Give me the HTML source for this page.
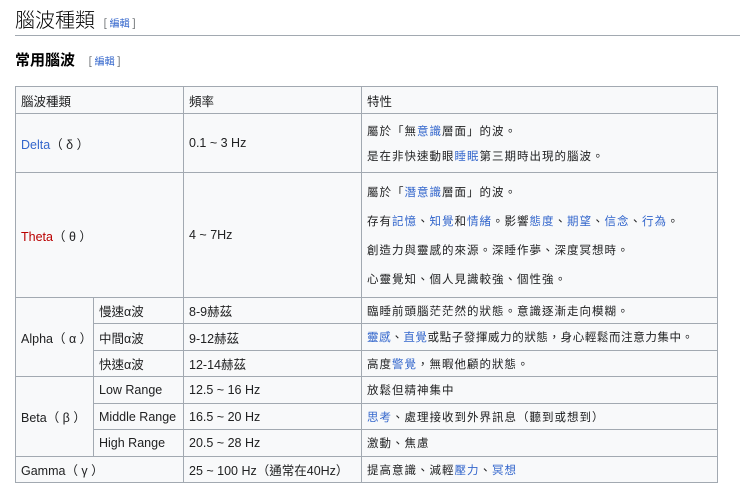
<!DOCTYPE html>
<html lang="zh-Hant"><head><meta charset="utf-8"><style>
body{margin:0;width:740px;height:494px;background:#fff;position:relative;overflow:hidden;font-family:"Liberation Sans","Noto Sans CJK TC",sans-serif;color:#202122}
.a{position:absolute}
.c{position:absolute;background:#f8f9fa;border:1px solid #a2a9b1;box-sizing:border-box;font-size:12.5px;display:flex;flex-direction:column;justify-content:center;padding-left:5px;white-space:nowrap}
.l{color:#3366cc}
.e{font-size:11px;color:#54595d;font-weight:normal}
.e b{font-weight:normal;color:#3366cc;font-size:10px}
.c p{margin:0}
.s{font-size:11.5px;letter-spacing:1px}
</style></head><body>
<div class="a" style="left:15px;top:4px;font-size:20px;font-weight:300;color:#000;font-family:'Noto Sans CJK TC',sans-serif;line-height:30px">腦波種類 <span class="e" style="margin-left:4px">[ <b>編輯</b> ]</span></div>
<div class="a" style="left:15px;top:35px;width:725px;height:1px;background:#a2a9b1"></div>
<div class="a" style="left:15px;top:49px;font-size:15px;font-weight:bold;color:#000;font-family:'Noto Sans CJK TC',sans-serif;line-height:22px">常用腦波 <span class="e" style="margin-left:10px">[ <b>編輯</b> ]</span></div>

<div class="c" style="left:15px;top:86px;width:169px;height:28px">腦波種類</div>
<div class="c" style="left:183px;top:86px;width:179px;height:28px">頻率</div>
<div class="c" style="left:361px;top:86px;width:357px;height:28px">特性</div>

<div class="c" style="left:15px;top:113px;width:169px;height:60px"><p><span class="l">Delta</span>（ δ ）</p></div>
<div class="c" style="left:183px;top:113px;width:179px;height:60px">0.1 ~ 3 Hz</div>
<div class="c s" style="left:361px;top:113px;width:357px;height:60px;justify-content:space-around;padding:4px 5px"><p>屬於「無<span class="l">意識</span>層面」的波。</p><p>是在非快速動眼<span class="l">睡眠</span>第三期時出現的腦波。</p></div>

<div class="c" style="left:15px;top:172px;width:169px;height:126px"><p><span style="color:#ba0000">Theta</span>（ θ ）</p></div>
<div class="c" style="left:183px;top:172px;width:179px;height:126px">4 ~ 7Hz</div>
<div class="c s" style="left:361px;top:172px;width:357px;height:126px;justify-content:space-around;padding:4px 5px"><p>屬於「<span class="l">潛意識</span>層面」的波。</p><p>存有<span class="l">記憶</span>、<span class="l">知覺</span>和<span class="l">情緒</span>。影響<span class="l">態度</span>、<span class="l">期望</span>、<span class="l">信念</span>、<span class="l">行為</span>。</p><p>創造力與靈感的來源。深睡作夢、深度冥想時。</p><p>心靈覺知、個人見識較強、個性強。</p></div>

<div class="c" style="left:15px;top:297px;width:79px;height:80px">Alpha（ α ）</div>
<div class="c" style="left:93px;top:297px;width:91px;height:27px">慢速α波</div>
<div class="c" style="left:93px;top:323px;width:91px;height:28px">中間α波</div>
<div class="c" style="left:93px;top:350px;width:91px;height:27px">快速α波</div>
<div class="c" style="left:183px;top:297px;width:179px;height:27px">8-9赫茲</div>
<div class="c" style="left:183px;top:323px;width:179px;height:28px">9-12赫茲</div>
<div class="c" style="left:183px;top:350px;width:179px;height:27px">12-14赫茲</div>
<div class="c s" style="left:361px;top:297px;width:357px;height:27px">臨睡前頭腦茫茫然的狀態。意識逐漸走向模糊。</div>
<div class="c s" style="left:361px;top:323px;width:357px;height:28px;letter-spacing:0.6px"><p><span class="l">靈感</span>、<span class="l">直覺</span>或點子發揮威力的狀態，身心輕鬆而注意力集中。</p></div>
<div class="c s" style="left:361px;top:350px;width:357px;height:27px"><p>高度<span class="l">警覺</span>，無暇他顧的狀態。</p></div>

<div class="c" style="left:15px;top:376px;width:79px;height:81px">Beta（ β ）</div>
<div class="c" style="left:93px;top:376px;width:91px;height:28px">Low Range</div>
<div class="c" style="left:93px;top:403px;width:91px;height:27px">Middle Range</div>
<div class="c" style="left:93px;top:429px;width:91px;height:28px">High Range</div>
<div class="c" style="left:183px;top:376px;width:179px;height:28px">12.5 ~ 16 Hz</div>
<div class="c" style="left:183px;top:403px;width:179px;height:27px">16.5 ~ 20 Hz</div>
<div class="c" style="left:183px;top:429px;width:179px;height:28px">20.5 ~ 28 Hz</div>
<div class="c s" style="left:361px;top:376px;width:357px;height:28px">放鬆但精神集中</div>
<div class="c s" style="left:361px;top:403px;width:357px;height:27px"><p><span class="l">思考</span>、處理接收到外界訊息（聽到或想到）</p></div>
<div class="c s" style="left:361px;top:429px;width:357px;height:28px">激動、焦慮</div>

<div class="c" style="left:15px;top:456px;width:169px;height:27px">Gamma（ γ ）</div>
<div class="c" style="left:183px;top:456px;width:179px;height:27px">25 ~ 100 Hz（通常在40Hz）</div>
<div class="c s" style="left:361px;top:456px;width:357px;height:27px"><p>提高意識、減輕<span class="l">壓力</span>、<span class="l">冥想</span></p></div>
</body></html>
